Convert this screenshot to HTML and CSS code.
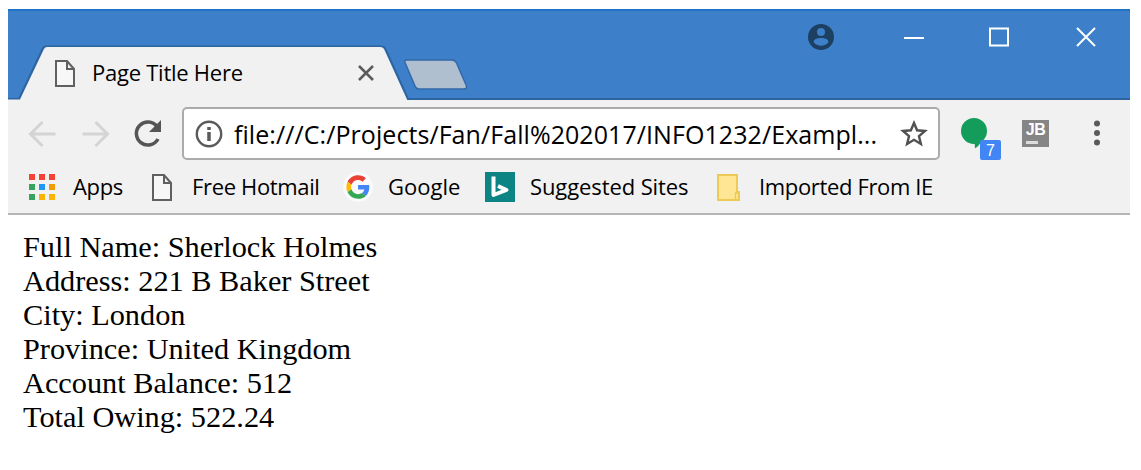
FILE: index.html
```
<!DOCTYPE html>
<html lang="en">
<head>
<meta charset="utf-8">
<title>Page Title Here</title>
<link rel="stylesheet" href="styles.css">
</head>
<body>
<div class="window">
  <header class="titlebar">
    <svg class="tab-shape" width="1122" height="91" viewBox="0 0 1122 91">
      <path d="M0 90H11L35 39Q36 37.500 38 37.500H373Q376 37.500 377 39L400 90H1122" fill="none" stroke="#2f659f" stroke-width="2"/>
      <path d="M0 91V90.500H12L36 40Q37 38 39 38H372Q375 38 376 40L399 90.500V91Z" fill="#f1f1f1"/>
      <path d="M398.500 51H444Q447 51 448.500 54L458.500 77Q459 80 456 80H411Q408 80 407 77L397 53.500Q396 51 398.500 51Z" fill="#b0bfd0" stroke="#3269a8" stroke-width="1.500"/>
    </svg>
    <div class="tab">
      <svg class="page" width="20" height="27" viewBox="0 0 20 27"><path d="M1 1H12L19 9V26H1ZM12 1V9H19" fill="#f7f7f7" stroke="#606060" stroke-width="2"/></svg>
      <span class="title">Page Title Here</span>
      <svg width="16" height="16" viewBox="0 0 16 16"><path d="M1 1L15 15M15 1L1 15" stroke="#5a5a5a" stroke-width="2.500"/></svg>
    </div>
    <div class="controls">
      <svg width="26" height="26" viewBox="0 0 26 26"><circle cx="13" cy="13" r="13" fill="#1d3f62"/><circle cx="13" cy="8" r="4" fill="#3d80c9"/><path d="M5.500 18C5.500 12.500 20.500 12.500 20.500 18C17 23 9 23 5.500 18Z" fill="#3d80c9"/></svg>
      <svg width="20" height="20" viewBox="0 0 20 20"><path d="M0 11H20" stroke="#fff" stroke-width="2"/></svg>
      <svg width="20" height="20" viewBox="0 0 20 20"><path d="M1 1.500H19V18.500H1Z" fill="none" stroke="#fff" stroke-width="2"/></svg>
      <svg width="20" height="20" viewBox="0 0 20 20"><path d="M1 1L19 19M19 1L1 19" stroke="#fff" stroke-width="2"/></svg>
    </div>
  </header>
  <div class="toolbar">
    <svg class="nav" width="135" height="30" viewBox="0 0 135 30"><path d="M28 15H4M15 3L3 15L15 27M55 15H79M68 3L80 15L68 27" transform="translate(-.5 0)" fill="none" stroke="#d4d4d4" stroke-width="3"/><path d="M129 7.500A11.500 11.500 0 1 0 130 20" fill="none" stroke="#555" stroke-width="3.500"/><path d="M133 1V13H121Z" fill="#555"/></svg>
    <div class="address">
      <svg width="28" height="28" viewBox="0 0 28 28"><circle cx="14" cy="14" r="12.200" fill="none" stroke="#5a5a5a" stroke-width="2.400"/><path d="M14 7V10M14 12V21" stroke="#5a5a5a" stroke-width="3.500"/></svg>
      <span class="url">file:///C:/Projects/Fan/Fall%202017/INFO1232/Exampl...</span>
      <svg class="star" width="28" height="28" viewBox="0 0 28 28"><path d="M14 3L17.100 10.300L25 11L19 16.200L20.900 24L14 19.800L7.100 24L9 16.200L3 11L10.900 10.300Z" fill="none" stroke="#505050" stroke-width="2.400"/></svg>
    </div>
    <div class="ext">
      <svg width="28" height="31" viewBox="0 0 28 31"><path d="M13 0A13 13 0 1 1 13 26A13 13 0 1 1 13 0ZM13.500 24H20Q18 28 14 30.500Z" fill="#149c5b"/></svg>
      <b class="count">7</b>
    </div>
    <div class="jb">JB<i></i></div>
    <svg class="menu" width="6" height="26" viewBox="0 0 6 26"><circle cx="3" cy="3.500" r="3" fill="#5a5a5a"/><circle cx="3" cy="13" r="3" fill="#5a5a5a"/><circle cx="3" cy="22.500" r="3" fill="#5a5a5a"/></svg>
  </div>
  <nav class="bookmarks">
    <div class="apps"><i></i><i></i><i></i><i></i><i></i><i></i><i></i><i></i><i></i></div>
    <span class="b1">Apps</span>
    <svg class="page" width="20" height="27" viewBox="0 0 20 27"><path d="M1 1H12L19 9V26H1ZM12 1V9H19" fill="#f7f7f7" stroke="#606060" stroke-width="2"/></svg>
    <span class="b2">Free Hotmail</span>
    <svg width="30" height="30" viewBox="-3 -3 54 54"><circle cx="24" cy="24" r="27" fill="#fafafa"/><g transform="translate(3 3) scale(.88)"><path fill="#ea4335" d="M24 9.500c3.500 0 6.700 1.200 9.200 3.600l6.900-6.900C35.900 2.400 30.500 0 24 0 14.600 0 6.500 5.400 2.600 13.200l8 6.200C12.400 13.700 17.700 9.500 24 9.500z"/><path fill="#4285f4" d="M47 24.600c0-1.600-.2-3.100-.4-4.600H24v9h12.900c-.6 3-2.300 5.500-4.800 7.200l7.700 6C44.400 38 47 31.800 47 24.600z"/><path fill="#fbbc05" d="M10.500 28.600c-.5-1.500-.8-3-.8-4.600s.3-3.100.8-4.600l-8-6.200C.9 16.500 0 20.100 0 24s.9 7.500 2.600 10.800z"/><path fill="#34a853" d="M24 48c6.500 0 11.900-2.100 15.900-5.800l-7.700-6c-2.200 1.500-4.900 2.300-8.200 2.300-6.300 0-11.600-4.200-13.500-9.900l-8 6.200C6.500 42.600 14.600 48 24 48z"/></g></svg>
    <span class="b3">Google</span>
    <svg width="30" height="30" viewBox="0 0 30 30"><path d="M0 0H30V30H0Z" fill="#0c8484"/><path d="M8.500 4.500V23L21.500 18L13 14" fill="none" stroke="#fff" stroke-width="4" stroke-linejoin="round"/></svg>
    <span class="b4">Suggested Sites</span>
    <svg class="folder" width="23" height="27" viewBox="0 0 23 27"><path d="M1 1H20V18H22V26H1Z" fill="#ffe694" stroke="#ecca55" stroke-width="2"/><path d="M18.500 26V19H22" fill="none" stroke="#ecca55" stroke-width="1.500"/></svg>
    <span class="b5">Imported From IE</span>
  </nav>
  <main class="content">
    <div>Full Name: Sherlock Holmes</div>
    <div>Address: 221 B Baker Street</div>
    <div>City: London</div>
    <div>Province: United Kingdom</div>
    <div>Account Balance: 512</div>
    <div>Total Owing: 522.24</div>
  </main>
</div>
</body>
</html>
```
FILE: styles.css
```
* { box-sizing: border-box; }
body { margin: 0; padding: 9px 11px 0 8px; background: #fff; height: 470px; overflow: hidden; }
svg { display: block; flex: none; }
span { white-space: nowrap; flex: none; }
.window { width: 1122px; font-family: "Open Sans", "Noto Sans", sans-serif; font-size: 22px; color: #000; }
.titlebar { position: relative; height: 91px; background: #3d80c9; border-top: 2px solid #2173c8; display: flex; justify-content: space-between; }
.tab-shape { position: absolute; left: 0; top: -2px; }
.tab { position: relative; display: flex; align-items: center; height: 36px; margin: 44px 0 0 47px; }
.title { margin: -2px 0 0 17px; width: 266px; letter-spacing: -.25px; }
.controls { position: relative; display: flex; height: 26px; margin: 13px 34px 0 0; align-items: center; }
.controls svg:nth-child(2) { margin-left: 70px; }
.controls svg:nth-child(3) { margin-left: 65px; }
.controls svg:nth-child(4) { margin-left: 67px; }
.toolbar { height: 67px; background: #f1f1f1; display: flex; padding-top: 7px; }
.nav { margin: 12px 0 0 20px; }
.address { display: flex; align-items: center; width: 758px; height: 53px; margin-left: 19px; padding-left: 11px; border: 2px solid #ababab; border-radius: 5px; background: #fff; }
.url { margin-left: 11px; width: 666px; font-size: 25px; letter-spacing: .07px; }
.ext { position: relative; width: 42px; height: 44px; margin: 11px 0 0 21px; }
.count { position: absolute; left: 19px; top: 22px; width: 21px; height: 20px; border-radius: 2px; background: #4285f4; color: #fff; font: 16px/21px "Liberation Sans", sans-serif; text-align: center; }
.jb { width: 27px; height: 27px; margin: 13px 0 0 19px; background: #858585; color: #fff; font: bold 16px/19px "Liberation Sans", sans-serif; text-align: center; letter-spacing: -.5px; }
.jb i { display: block; width: 12px; height: 3px; margin: 2px 0 0 4px; background: #ddd; }
.menu { margin: 13px 0 0 45px; }
.bookmarks { height: 48px; background: #f1f1f1; border-bottom: 2px solid #b5b5b5; display: flex; align-items: center; padding: 0 0 6px 21px; }
.apps { display: grid; grid-template-columns: repeat(3, 6px); gap: 4px; width: 26px; }
.apps i { height: 6px; background: #f44336; }
.apps i:nth-child(4), .apps i:nth-child(7) { background: #36a35e; }
.apps i:nth-child(5) { background: #2196f3; }
.apps i:nth-child(6) { background: #f29b05; }
.apps i:nth-child(8), .apps i:nth-child(9) { background: #fbb404; }
.bookmarks span { margin-top: -2px; letter-spacing: -.35px; }
.bookmarks .b1 { margin-left: 18px; width: 79px; }
.bookmarks .b2 { margin-left: 20px; width: 151px; }
.bookmarks .b3 { margin-left: 15px; width: 97px; letter-spacing: 0; }
.bookmarks .b4 { margin-left: 15px; width: 187px; letter-spacing: -.1px; }
.bookmarks .b5 { margin-left: 19px; }
.content { padding: 15px; font: 30.3px/34px "Liberation Serif", serif; color: #000; }
```
